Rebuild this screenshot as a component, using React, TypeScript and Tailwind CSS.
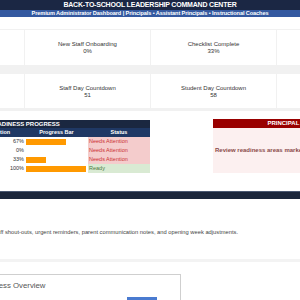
const CARDS = [
  ['Overall Readiness', '58%'],
  ['New Staff Onboarding', '0%'],
  ['Checklist Complete', '33%'],
  ['Open Tasks', '4'],
  ['Days Until Opening', '58'],
  ['Staff Day Countdown', '51'],
  ['Student Day Countdown', '58'],
  ['Items Ready', '1'],
]

const ROWS = [
  { area: 'Facilities', pct: 67, status: 'Needs Attention' },
  { area: 'Onboarding', pct: 0, status: 'Needs Attention' },
  { area: 'Scheduling', pct: 33, status: 'Needs Attention' },
  { area: 'Safety', pct: 100, status: 'Ready' },
]

export default function App() {
  return (
    <div className="w-[300px] h-[300px] overflow-hidden bg-white text-[#333] font-['Liberation_Sans',Arial,sans-serif]">
      {/* Header */}
      <div className="h-[10px] bg-[#1b2744] text-white text-[7px] font-bold leading-[10px] text-center tracking-[-0.2px]">
        BACK-TO-SCHOOL LEADERSHIP COMMAND CENTER
      </div>
      <div className="h-[7px] bg-[#3459a0] text-white text-[5.6px] font-bold leading-[7px] text-center whitespace-nowrap tracking-[-0.1px]">
        Premium Administrator Dashboard | Principals • Assistant Principals • Instructional Coaches
      </div>

      {/* KPI cards */}
      <div className="mt-[12px] bg-[#f1f1f1] pt-px pb-[3px] ml-[-101px] w-[505px]">
        <div className="grid grid-cols-[125px_125px_125px_125px] gap-x-px gap-y-[9px]">
          {CARDS.map(([label, value], i) => (
            <div
              key={label}
              className={`bg-white flex flex-col items-center justify-center pt-px text-[6px] leading-[7px] text-[#333] ${i < 4 ? 'h-[35px]' : 'h-[34px]'}`}
            >
              <div>{label}</div>
              <div>{value}</div>
            </div>
          ))}
        </div>
      </div>

      {/* Readiness table + principal alert */}
      <div className="mt-[9px] flex items-start">
        <div className="ml-[-101px] w-[251px] shrink-0">
          <div className="h-[8px] bg-[#1a2740] text-white text-[6px] font-bold leading-[8px] text-center">
            READINESS PROGRESS
          </div>
          <div className="h-[9px] bg-[#1f3864] text-white text-[5.5px] font-bold leading-[9px] grid grid-cols-[66px_60px_63px_62px]">
            <div className="text-center">Area</div>
            <div className="text-center">Completion</div>
            <div className="text-center">Progress Bar</div>
            <div className="text-center">Status</div>
          </div>
          {ROWS.map(r => (
            <div key={r.area} className="h-[9px] grid grid-cols-[66px_60px_63px_62px] text-[5.5px] leading-[9px]">
              <div className="pl-[2px]">{r.area}</div>
              <div className="text-right pr-px">{r.pct}%</div>
              <div className="pl-px pr-px flex items-center">
                <div className="h-[6px] bg-[#ff9900]" style={{ width: `${(r.pct / 100) * 60}px` }} />
              </div>
              <div
                className={
                  r.status === 'Ready'
                    ? 'bg-[#d9ead3] text-[#4e7a3a] pl-px'
                    : 'bg-[#f4cccc] text-[#cc3333] pl-px'
                }
              >
                {r.status}
              </div>
            </div>
          ))}
        </div>

        <div className="ml-[63px] mt-[-1px] w-[196px] shrink-0 bg-[#fcf0f0]">
          <div className="h-[9px] bg-[#990000] text-white text-[6px] font-bold leading-[9px] text-center whitespace-nowrap">
            PRINCIPAL PRIORITY ALERTS
          </div>
          <div className="h-[45px] flex items-center pl-[2px] text-[6px] font-bold text-[#8a4a4a] whitespace-nowrap">
            Review readiness areas marked Needs Attention before staff return.
          </div>
        </div>
      </div>

      {/* Section divider */}
      <div className="mt-[18px] h-[8px] bg-[#1b263b] border-t border-[#4a5872]" />

      {/* Notes */}
      <div className="mt-[29px] ml-[-55px] whitespace-nowrap text-[5.75px] leading-[8px] text-[#444]">
        Use this space for staff shout-outs, urgent reminders, parent communication notes, and opening week adjustments.
      </div>

      <div className="mt-[23px] h-[3px] bg-[#f3f3f3]" />

      {/* Chart */}
      <div className="mt-[12px] ml-[-40px] w-[221px] h-[40px] border border-[#cfcfcf] bg-white">
        <div className="pl-[13px] pt-[5px] text-[7.8px] leading-[12px] text-[#555] whitespace-nowrap">Readiness Overview</div>
        <div className="ml-[166px] mt-[5px] w-[30px] h-[10px] bg-[#4a7bd0]" />
      </div>
    </div>
  )
}
